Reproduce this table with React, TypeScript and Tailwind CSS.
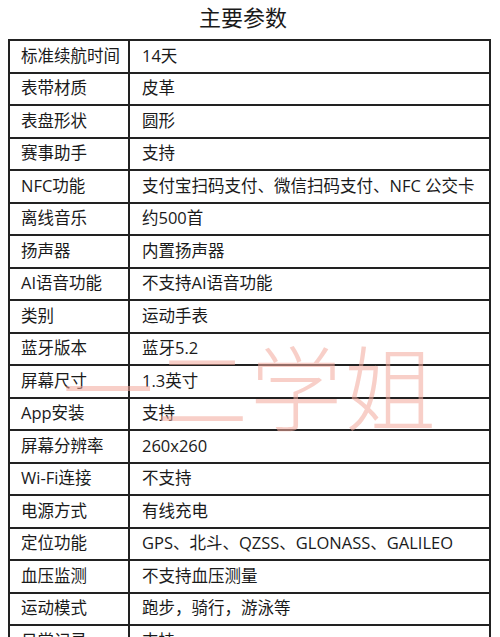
import React from "react";

const rows: [string, string][] = [
  ["标准续航时间", "14天"],
  ["表带材质", "皮革"],
  ["表盘形状", "圆形"],
  ["赛事助手", "支持"],
  ["NFC功能", "支付宝扫码支付、微信扫码支付、NFC 公交卡"],
  ["离线音乐", "约500首"],
  ["扬声器", "内置扬声器"],
  ["AI语音功能", "不支持AI语音功能"],
  ["类别", "运动手表"],
  ["蓝牙版本", "蓝牙5.2"],
  ["屏幕尺寸", "1.3英寸"],
  ["App安装", "支持"],
  ["屏幕分辨率", "260x260"],
  ["Wi-Fi连接", "不支持"],
  ["电源方式", "有线充电"],
  ["定位功能", "GPS、北斗、QZSS、GLONASS、GALILEO"],
  ["血压监测", "不支持血压测量"],
  ["运动模式", "跑步，骑行，游泳等"],
  ["日常记录", "支持"],
];

export default function App() {
  return (
    <div
      className="relative w-[500px] bg-white text-[#1a1a1a]"
      style={{ fontFamily: '"Open Sans", "Noto Sans CJK SC", sans-serif' }}
    >
      <div className="h-[39px] flex items-start justify-center pt-[1px] pr-[14px] text-[22px] leading-[32px]">
        主要参数
      </div>
      <div className="ml-[8px] w-[483px] border-t-2 border-l-2 border-[#222]">
        {rows.map(([k, v]) => (
          <div key={k} className="flex h-[32.5px]">
            <div className="w-[120px] shrink-0 border-r-2 border-b-2 border-[#222] pl-[11px] flex items-center text-[16.5px] whitespace-nowrap">
              {k}
            </div>
            <div className="flex-1 border-r-2 border-b-2 border-[#222] pl-[12px] flex items-center text-[16.5px] whitespace-nowrap">
              {v}
            </div>
          </div>
        ))}
      </div>
      <div className="pointer-events-none absolute left-[62px] top-[343px] text-[92px] leading-none tracking-[2px] font-light text-[#f3a99c] opacity-55 whitespace-nowrap">
        一二学姐
      </div>
    </div>
  );
}
